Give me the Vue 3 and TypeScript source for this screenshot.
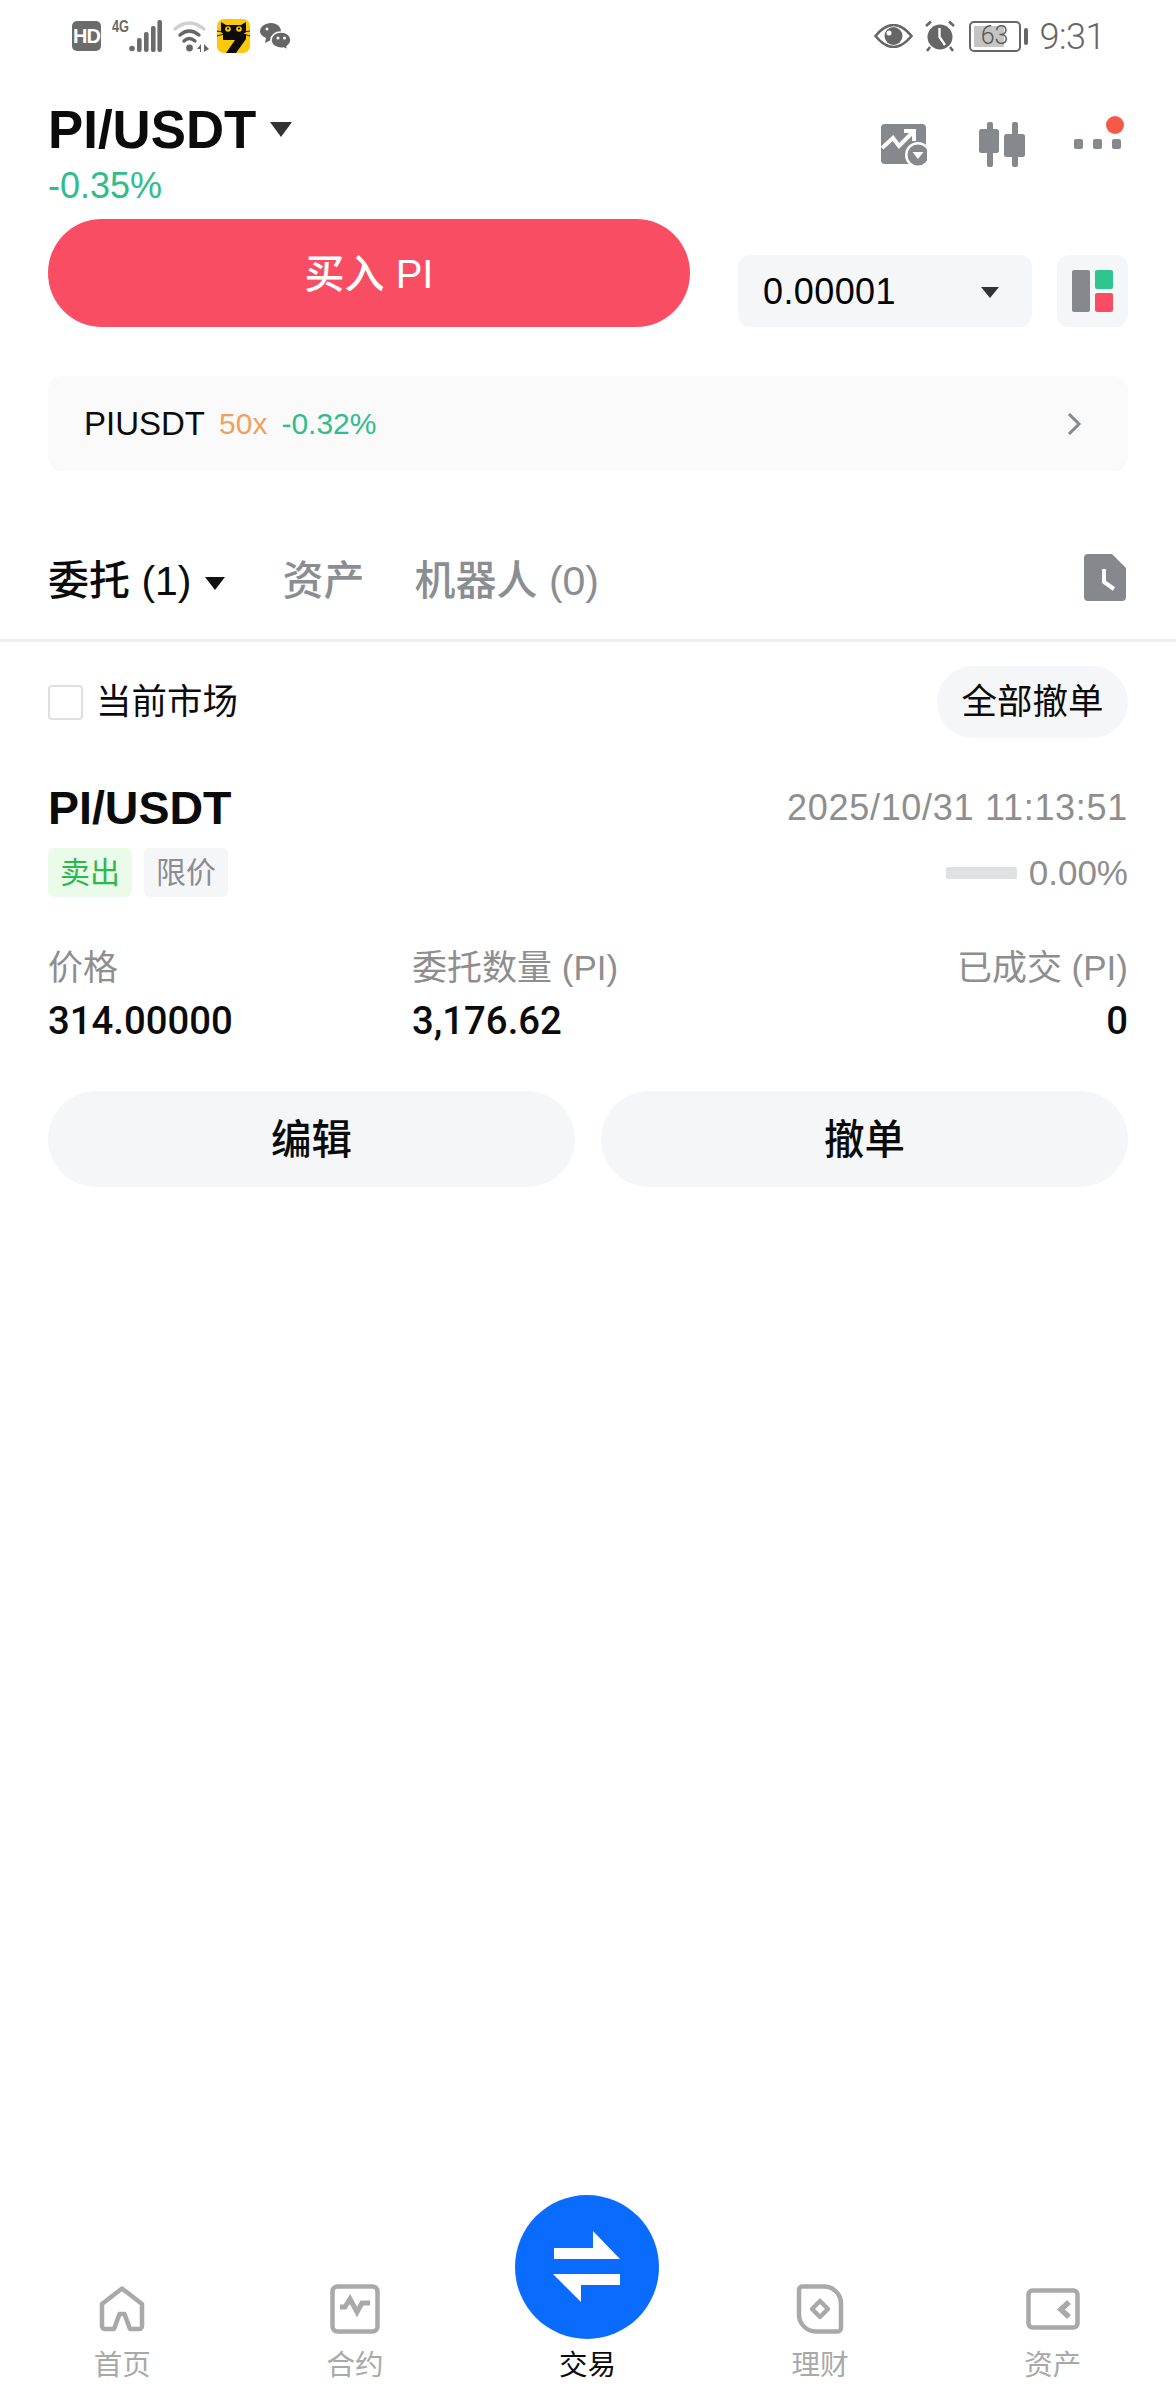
<script setup lang="ts">
interface NavItem {
  label: string
  key: string
}

const navLeft: NavItem[] = [
  { label: '首页', key: 'home' },
  { label: '合约', key: 'contract' }
]
const navRight: NavItem[] = [
  { label: '理财', key: 'finance' },
  { label: '资产', key: 'asset' }
]
</script>

<template>
  <div class="page">
    <!-- status bar -->
    <div class="status">
      <div class="status-left">
        <div class="hd">HD</div>
        <div class="signal">
          <span class="net">4G</span>
          <svg width="33" height="32" viewBox="0 0 33 32" fill="#6b6b6b">
            <circle cx="3" cy="28.5" r="2.8" />
            <rect x="8" y="18" width="4.6" height="14" rx="2" />
            <rect x="15" y="12" width="4.6" height="20" rx="2" />
            <rect x="22" y="6" width="4.6" height="26" rx="2" />
            <rect x="28.4" y="0" width="4.6" height="32" rx="2" />
          </svg>
        </div>
        <svg class="wifi" width="37" height="32" viewBox="0 0 37 32" fill="none">
          <path d="M2 9 Q16 -3 31 9" stroke="#cfcfcf" stroke-width="3.2" stroke-linecap="round" />
          <path d="M7 15 Q16 7 26 15" stroke="#666" stroke-width="3.4" stroke-linecap="round" />
          <path d="M11 21 Q16 16 22 21" stroke="#666" stroke-width="3.4" stroke-linecap="round" />
          <circle cx="16.5" cy="28" r="3.4" fill="#666" />
          <path d="M24 29 L28 24 V32 H27 V29Z M31 24 L36 29 L31 32Z" fill="#666" />
        </svg>
        <svg class="cat" width="33" height="34" viewBox="0 0 33 34">
          <rect width="33" height="34" rx="7" fill="#fcc80c" />
          <path d="M4 3 L9 6 H24 L29 3 V13 L26 15.500 H7 L4 13Z" fill="#0c0c0c" />
          <circle cx="11" cy="10" r="2.800" fill="#fcc80c" />
          <circle cx="22" cy="10" r="2.800" fill="#fcc80c" />
          <circle cx="11" cy="9.500" r="1.100" fill="#0c0c0c" />
          <circle cx="22" cy="9.500" r="1.100" fill="#0c0c0c" />
          <path d="M0 12 L6 13 M0 17 L7 15 M33 12 L27 13 M33 17 L26 15" stroke="#0c0c0c" stroke-width="0.900" />
          <path d="M6 15 H29 V20 L19 34 H9 L18 21 H6Z" fill="#0c0c0c" />
        </svg>
        <svg class="wechat" width="31" height="27" viewBox="0 0 31 27" fill="#666">
          <path d="M11 0 C17 0 21 4 21 8.500 C21 13 17 17 11 17 L5 20 L6 15 C2 13 0 11 0 8.500 C0 4 5 0 11 0Z" />
          <path d="M21 9 C27 9 31 12.500 31 17 C31 20 29 22 27 23.500 L28 27 L23.500 25 C17 26 11 22.500 11 17 C11 12.500 15 9 21 9Z" stroke="#fff" stroke-width="1.500" />
          <circle cx="7" cy="6" r="1.500" fill="#fff" />
          <circle cx="18" cy="15" r="1.500" fill="#fff" />
          <circle cx="24.500" cy="15" r="1.500" fill="#fff" />
        </svg>
      </div>
      <div class="status-right">
        <svg width="39" height="24" viewBox="0 0 39 24" fill="none">
          <path d="M1.500 12 Q19.500 -10 37.500 12 Q19.500 34 1.500 12Z" stroke="#666" stroke-width="2.600" />
          <circle cx="19.500" cy="12" r="9" fill="#666" />
          <circle cx="15" cy="9" r="2.500" fill="#fff" />
        </svg>
        <svg class="alarm" width="32" height="32" viewBox="0 0 32 32" fill="none">
          <circle cx="16" cy="17" r="12.500" fill="#666" />
          <path d="M15.500 8 V17 L21 25" stroke="#fff" stroke-width="2.400" />
          <path d="M2 6 L7 1.500 M30 6 L25 1.500 M6 27 L3 31 M26 27 L29 31" stroke="#666" stroke-width="2.600" />
        </svg>
        <div class="battery">
          <div class="battery-fill"></div>
          <span class="battery-text">63</span>
        </div>
        <div class="battery-nub"></div>
        <span class="time">9:31</span>
      </div>
    </div>

    <!-- pair header -->
    <div class="head">
      <div>
        <div class="pair">
          <span class="pair-name">PI/USDT</span>
          <span class="caret caret-lg"></span>
        </div>
        <div class="change">-0.35%</div>
      </div>
      <div class="head-tools">
        <svg width="46" height="42" viewBox="0 0 46 42">
          <path d="M4 0 H41 a4 4 0 0 1 4 4 V30 L34 40 H4 a4 4 0 0 1-4-4 V4 a4 4 0 0 1 4-4Z" fill="#85898d" />
          <path d="M1 24 L12 14 L18 22 L31 9" fill="none" stroke="#fff" stroke-width="4" />
          <path d="M23 7 H33 V17" fill="none" stroke="#fff" stroke-width="4" />
          <circle cx="37" cy="31" r="13" fill="#fff" />
          <circle cx="37" cy="31" r="10.500" fill="#85898d" />
          <path d="M31.500 28 H42.500 L37 35Z" fill="#fff" />
        </svg>
        <svg class="candles" width="46" height="45" viewBox="0 0 46 45" fill="#85898d">
          <rect x="8" y="0" width="6" height="45" rx="2" />
          <rect x="0" y="7" width="20" height="24" rx="2.500" />
          <rect x="33" y="0" width="6" height="45" rx="2" />
          <rect x="25" y="12" width="21" height="23" rx="2.500" />
        </svg>
        <div class="more">
          <i></i><i></i><i></i>
          <b class="badge"></b>
        </div>
      </div>
    </div>

    <!-- buy row -->
    <div class="buy-row">
      <div class="buy-btn">买入 PI</div>
      <div class="tick">
        <span>0.00001</span>
        <span class="caret caret-sm"></span>
      </div>
      <div class="layout-btn">
        <div class="lay-a"></div>
        <div class="lay-b">
          <div class="lay-green"></div>
          <div class="lay-red"></div>
        </div>
      </div>
    </div>

    <!-- futures link -->
    <div class="futures">
      <span class="fut-name">PIUSDT</span>
      <span class="fut-lev">50x</span>
      <span class="fut-chg">-0.32%</span>
      <svg class="chev" width="16" height="24" viewBox="0 0 16 24" fill="none">
        <path d="M3 2 L13 12 L3 22" stroke="#85898d" stroke-width="3" />
      </svg>
    </div>

    <!-- tabs -->
    <div class="tabs">
      <div class="tab tab-on">委托 (1)<span class="caret caret-tab"></span></div>
      <div class="tab">资产</div>
      <div class="tab">机器人 (0)</div>
      <svg class="tab-doc" width="42" height="47" viewBox="0 0 42 47">
        <path d="M4 0 H28 L42 14 V43 a4 4 0 0 1-4 4 H4 a4 4 0 0 1-4-4 V4 a4 4 0 0 1 4-4Z" fill="#85898d" />
        <path d="M20 15 V28 L30 35" fill="none" stroke="#fff" stroke-width="4" />
      </svg>
    </div>

    <!-- filter -->
    <div class="filter">
      <div class="check"></div>
      <span class="filter-text">当前市场</span>
      <div class="cancel-all">全部撤单</div>
    </div>

    <!-- order -->
    <div class="order-top">
      <span class="order-pair">PI/USDT</span>
      <span class="order-date">2025/10/31 11:13:51</span>
    </div>
    <div class="order-tags">
      <span class="tag tag-sell">卖出</span>
      <span class="tag tag-limit">限价</span>
      <div class="progress"></div>
      <span class="percent">0.00%</span>
    </div>
    <div class="order-grid">
      <span class="lbl">价格</span>
      <span class="lbl">委托数量 (PI)</span>
      <span class="lbl right">已成交 (PI)</span>
      <span class="val">314.00000</span>
      <span class="val">3,176.62</span>
      <span class="val right">0</span>
    </div>
    <div class="order-btns">
      <div class="order-btn">编辑</div>
      <div class="order-btn">撤单</div>
    </div>

    <!-- bottom nav -->
    <div class="nav">
      <div v-for="item in navLeft" :key="item.key" class="nav-item">
        <svg class="nav-icon" width="50" height="50" viewBox="0 0 50 50" fill="none" stroke="#a9a9a9" stroke-width="4.500">
          <template v-if="item.key === 'home'">
            <path d="M25 4.500 L45 20 V42 a3 3 0 0 1-3 3 H33 L27.500 30 H22.500 L17 45 H8 a3 3 0 0 1-3-3 V20Z" stroke-linejoin="round" />
          </template>
          <template v-else>
            <rect x="2.500" y="2.500" width="45" height="45" rx="5" />
            <path d="M10 23 H15 L20 15 L27 28 L32 19 H40" stroke-width="5" />
          </template>
        </svg>
        <span class="nav-label">{{ item.label }}</span>
      </div>
      <div class="nav-item">
        <div class="trade-circle">
          <svg width="68" height="72" viewBox="0 0 68 72" fill="#fff">
            <path d="M1 17 H40 V0 L67 28 H1Z" />
            <path d="M67 54 H28 V71 L0 43 H67Z" />
          </svg>
        </div>
        <span class="nav-label nav-on">交易</span>
      </div>
      <div v-for="item in navRight" :key="item.key" class="nav-item">
        <svg class="nav-icon" width="54" height="50" viewBox="0 0 54 50" fill="none" stroke="#a9a9a9" stroke-width="4.500">
          <template v-if="item.key === 'finance'">
            <path d="M10 2.500 H31 a17 17 0 0 1 17 17 V44 a3.500 3.500 0 0 1-3.500 3.500 H23 a17 17 0 0 1-17-17 V6 a3.500 3.500 0 0 1 4-3.500Z" />
            <path d="M27 17 L35 25 L27 33 L19 25Z" stroke-linejoin="round" />
          </template>
          <template v-else>
            <rect x="2.500" y="6.500" width="49" height="37" rx="4" />
            <path d="M43 18 L35 25.500 L43 33" stroke-width="5.500" />
          </template>
        </svg>
        <span class="nav-label">{{ item.label }}</span>
      </div>
    </div>
  </div>
</template>

<style>
body {
  background: #fff;
}
</style>

<style scoped>
.page {
  width: 1176px;
  min-height: 2400px;
  display: flex;
  flex-direction: column;
  background: #fff;
  color: #0b0b0b;
  font-family: "Liberation Sans", "Noto Sans CJK SC", sans-serif;
  overflow: hidden;
}

.status {
  height: 72px;
  padding: 0 71px 0 72px;
  display: flex;
  justify-content: space-between;
  align-items: center;
  box-sizing: border-box;
}
.status-left,
.status-right {
  display: flex;
  align-items: center;
}
.hd {
  width: 29px;
  height: 30px;
  border-radius: 5px;
  background: #6b6b6b;
  color: #fff;
  font: bold 20px/30px "Liberation Sans", sans-serif;
  letter-spacing: -1px;
  text-align: center;
}
.signal {
  margin-left: 11px;
  display: flex;
  align-items: flex-start;
}
.net {
  width: 17px;
  font: bold 16px/13px "Liberation Sans", sans-serif;
  color: #6b6b6b;
  transform: scaleX(0.8);
  transform-origin: left;
}
.wifi {
  margin-left: 11px;
}
.cat {
  margin-left: 7px;
}
.wechat {
  margin-left: 10px;
}
.alarm {
  margin-left: 11px;
}
.battery {
  position: relative;
  margin-left: 13px;
  width: 52px;
  height: 31px;
  border: 2.500px solid #666;
  border-radius: 5px;
  box-sizing: border-box;
  padding: 3px;
}
.battery-fill {
  width: 30px;
  height: 100%;
  background: #c4c4c4;
  border-radius: 1px;
}
.battery-text {
  position: absolute;
  inset: 0;
  text-align: center;
  font: 300 25px/26px Roboto, sans-serif;
  color: #555;
}
.battery-nub {
  width: 4px;
  height: 17px;
  margin-left: 3px;
  background: #666;
  border-radius: 2px;
}
.time {
  margin-left: 12px;
  padding-top: 2px;
  font: 300 36px/40px Roboto, sans-serif;
  letter-spacing: -0.5px;
  color: #666;
}

.head {
  padding: 28px 55px 0 48px;
  display: flex;
  justify-content: space-between;
  align-items: flex-start;
}
.pair {
  display: flex;
  align-items: center;
  height: 60px;
}
.pair-name {
  font-size: 52.800px;
  line-height: 60px;
  font-weight: 700;
}
.caret {
  display: inline-block;
  width: 0;
  height: 0;
  border-style: solid;
  border-color: #333 transparent transparent transparent;
}
.caret-lg {
  margin: -2px 0 0 14px;
  border-width: 15px 11px 0 11px;
}
.caret-sm {
  margin-left: auto;
  border-width: 11px 9px 0 9px;
}
.caret-tab {
  margin: 0 0 0 13px;
  border-width: 13px 10px 0 10px;
  border-top-color: #111;
  vertical-align: 5px;
}
.change {
  margin-top: 8px;
  font-size: 36px;
  line-height: 36px;
  color: #2fbd8d;
}
.head-tools {
  margin-top: 24px;
  display: flex;
  align-items: flex-start;
}
.candles {
  margin-left: 52px;
  margin-top: -2px;
}
.more {
  position: relative;
  margin-left: 49px;
  margin-top: 15px;
  display: flex;
  gap: 10px;
}
.more i {
  width: 9px;
  height: 10px;
  border-radius: 2px;
  background: #85898d;
}
.badge {
  position: absolute;
  right: -3px;
  top: -23px;
  width: 18px;
  height: 18px;
  border-radius: 50%;
  background: #f55a47;
}

.buy-row {
  margin-top: 15px;
  padding: 0 48px;
  display: flex;
  align-items: flex-end;
}
.buy-btn {
  width: 642px;
  height: 108px;
  border-radius: 54px;
  background: #f94d63;
  color: #fff;
  font-size: 40px;
  font-weight: 500;
  line-height: 110px;
  text-align: center;
}
.tick {
  margin-left: 48px;
  width: 294px;
  height: 72px;
  padding: 2px 33px 0 25px;
  box-sizing: border-box;
  display: flex;
  align-items: center;
  border-radius: 12px;
  background: #f5f6f7;
  font-size: 36px;
  letter-spacing: 0.4px;
  color: #000;
}
.layout-btn {
  margin-left: 25px;
  width: 71px;
  height: 72px;
  padding: 15px;
  box-sizing: border-box;
  display: flex;
  gap: 5px;
  border-radius: 12px;
  background: #f5f6f7;
}
.lay-a {
  width: 18px;
  border-radius: 2px;
  background: #85898d;
}
.lay-b {
  flex: 1;
  display: flex;
  flex-direction: column;
  gap: 4px;
}
.lay-green,
.lay-red {
  flex: 1;
  border-radius: 2px;
  background: #2ec58f;
}
.lay-red {
  background: #f94d63;
}

.futures {
  margin: 49px 48px 0;
  height: 95px;
  padding: 0 46px 0 36px;
  box-sizing: border-box;
  display: flex;
  align-items: center;
  border-radius: 14px;
  background: #fafafa;
}
.fut-name {
  font-size: 33px;
}
.fut-lev {
  margin-left: 14px;
  font-size: 30px;
  color: #f0a05f;
}
.fut-chg {
  margin-left: 14px;
  font-size: 30px;
  color: #2fbd8d;
}
.chev {
  margin-left: auto;
}

.tabs {
  height: 171px;
  padding: 44px 50px 0 48px;
  box-sizing: border-box;
  display: flex;
  align-items: center;
  border-bottom: 3px solid #eeeeee;
}
.tab {
  margin-right: 50px;
  font-size: 41px;
  color: #8a8e93;
  font-weight: 500;
}
.tab-on {
  margin-right: 58px;
  color: #0b0b0b;
}
.tab-doc {
  margin-left: auto;
}

.filter {
  margin-top: 24px;
  height: 72px;
  padding: 0 48px;
  display: flex;
  align-items: center;
}
.check {
  width: 35px;
  height: 35px;
  box-sizing: border-box;
  border: 2.500px solid #dedfe0;
  border-radius: 4px;
}
.filter-text {
  margin-left: 13px;
  font-size: 35.500px;
  line-height: 72px;
}
.cancel-all {
  margin-left: auto;
  width: 191px;
  height: 72px;
  border-radius: 36px;
  background: #f5f6f7;
  font-size: 35.500px;
  line-height: 72px;
  text-align: center;
}

.order-top {
  margin-top: 42px;
  padding: 0 48px;
  height: 56px;
  display: flex;
  justify-content: space-between;
  align-items: center;
}
.order-pair {
  font-size: 46.500px;
  font-weight: 700;
}
.order-date {
  font-size: 36px;
  letter-spacing: 0.7px;
  color: #8e8e8e;
}
.order-tags {
  margin-top: 12px;
  padding: 0 48px;
  display: flex;
  align-items: center;
}
.tag {
  width: 84px;
  height: 49px;
  border-radius: 6px;
  font-size: 30px;
  line-height: 49px;
  text-align: center;
}
.tag-sell {
  background: #eafbea;
  color: #2db84d;
}
.tag-limit {
  margin-left: 12px;
  background: #f5f6f7;
  color: #8a8e93;
}
.progress {
  margin-left: auto;
  width: 71px;
  height: 12px;
  background: #dfe1e3;
  border-radius: 2px;
}
.percent {
  margin-left: 12px;
  font-size: 35px;
  color: #8e8e8e;
}
.order-grid {
  margin-top: 49px;
  padding: 0 48px;
  display: grid;
  grid-template-columns: 364px 1fr auto;
  row-gap: 9px;
}
.lbl {
  font-size: 35px;
  line-height: 44px;
  color: #8e8e8e;
}
.val {
  font-family: Roboto, "Liberation Sans", sans-serif;
  font-size: 38.300px;
  line-height: 44px;
  font-weight: 500;
}
.right {
  text-align: right;
}
.order-btns {
  margin-top: 48px;
  padding: 0 48px;
  display: flex;
  gap: 26px;
}
.order-btn {
  flex: 1;
  height: 96px;
  border-radius: 48px;
  background: #f4f6f7;
  font-size: 40.500px;
  font-weight: 500;
  line-height: 98px;
  text-align: center;
}

.nav {
  margin-top: auto;
  padding: 0 7px 18px 6px;
  display: grid;
  grid-template-columns: repeat(5, 1fr);
  align-items: end;
}
.nav-item {
  display: flex;
  flex-direction: column;
  align-items: center;
}
.nav-icon {
  margin-bottom: 14px;
}
.nav-label {
  font-size: 28.500px;
  line-height: 34px;
  color: #a9a9a9;
}
.nav-on {
  color: #0b0b0b;
}
.trade-circle {
  width: 144px;
  height: 144px;
  margin-bottom: 9px;
  border-radius: 50%;
  background: #0a6cff;
  display: flex;
  align-items: center;
  justify-content: center;
}
</style>
